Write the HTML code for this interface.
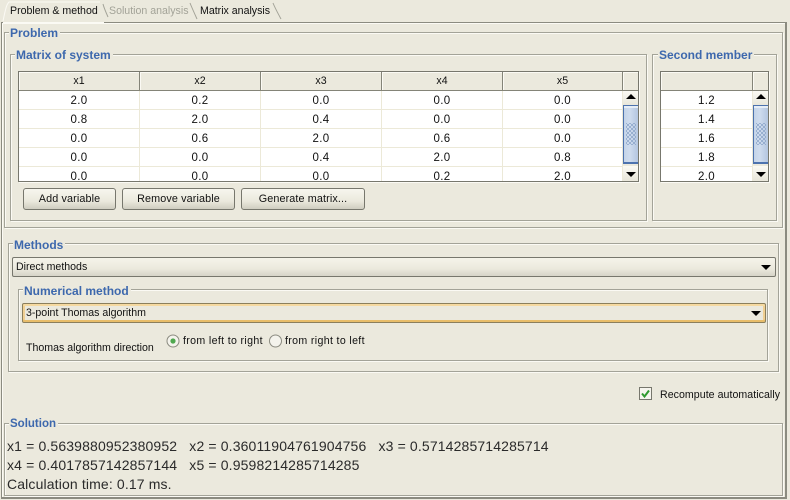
<!DOCTYPE html>
<html><head><meta charset="utf-8"><style>
html,body{margin:0;padding:0}
body{width:790px;height:500px;overflow:hidden;background:#ebe9dd;position:relative;font:10.6px/14px "Liberation Sans",sans-serif;color:#111}
div,span{position:absolute;box-sizing:border-box;white-space:nowrap}
.gb{border:1px solid #a3a398;box-shadow:1px 1px 0 #fbfaf4, inset 1px 1px 0 #fbfaf4}
.lg{font:bold 12px/14px "Liberation Sans",sans-serif;color:#3d68ad;background:#ebe9dd;padding:0 2px 0 1px}
.hd{background:#ebe9dd;border-right:1px solid #848478;border-bottom:1px solid #848478;text-align:center;height:19px;top:72px;line-height:19px;font-size:10.6px;padding-top:0;box-shadow:inset 1px 1px 0 #fbfaf4}
.tb{border:1px solid #77776d;background:#fff;overflow:hidden;box-shadow:1px 1px 0 #fbfaf4}
.cell{text-align:center;font-size:11.5px;line-height:21px;height:19px;border-right:1px solid #ece9d8;border-bottom:1px solid #ece9d8;background:#fff;letter-spacing:.3px}
.btn{top:188px;height:22px;border:1px solid #77776d;border-radius:3px;background:linear-gradient(#f7f6ee,#ebe9dd 60%,#cfcdc0);text-align:center;line-height:21px;font-size:10.8px;letter-spacing:.12px}
.combo{border:1px solid #77776d;border-radius:2px;background:linear-gradient(#f5f4ea,#ebe9dd 60%,#d6d4c8);padding-left:3px;line-height:19px;font-size:10.6px}
.arr{width:0;height:0;border-left:5px solid transparent;border-right:5px solid transparent;border-top:5px solid #000}
.sb{width:15px;background:#ebe9dd}
.up{width:15px;height:14px;background:linear-gradient(#fbfaf4,#e8e6da);}
.thumb{width:15px;background:linear-gradient(90deg,#c4d4e8,#cfdcee 40%,#b4c6e0);border-top:1px solid #4c72ae;border-bottom:2px solid #4c72ae;border-left:1px solid #4c72ae;box-shadow:inset 0 2px 0 #e6edf6}
.grip{width:10px;height:22px;background-image:radial-gradient(#7f9bc2 0.75px,transparent 0.95px),radial-gradient(#7f9bc2 0.75px,transparent 0.95px);background-size:4px 4px;background-position:0 0,2px 2px}
.tab{top:4px;font-size:10.6px;line-height:14px}
.sol{font-size:14px;line-height:19px;left:7px;letter-spacing:.14px;color:#2a2a2a}
.rt{letter-spacing:.35px}
</style></head><body>

<!-- tabs -->
<div class="tab" style="left:10px">Problem &amp; method</div>
<div class="tab" style="left:109px;color:#a3a398">Solution analysis</div>
<div class="tab" style="left:200px">Matrix analysis</div>
<svg style="position:absolute;left:0;top:0" width="300" height="24"><path d="M3 21 C5 12 6 5 9 2 H100" fill="none" stroke="#fbfaf4"/><path d="M103 4 Q104 8 108 17 M190 3 Q192 8 197 19 M273 3 Q275 8 281 19" fill="none" stroke="#a3a398"/></svg>

<!-- tab pane -->
<div style="left:1px;top:22px;width:786px;height:477px;border:1px solid #8b8b80;border-bottom:2px solid #8b8b80;border-right:2px solid #8b8b80;box-shadow:inset 1px 1px 0 #fbfaf4"></div>
<div style="left:3px;top:22px;width:101px;height:1px;background:#fbfaf4"></div>

<!-- Problem -->
<div class="gb" style="left:4px;top:32px;width:779px;height:196px"></div>
<div class="lg" style="left:9px;top:26px">Problem</div>

<!-- Matrix of system -->
<div class="gb" style="left:10px;top:54px;width:637px;height:167px"></div>
<div class="lg" style="left:15px;top:48px">Matrix of system</div>

<div class="tb" style="left:18px;top:71px;width:621px;height:111px"></div>
<div class="hd" style="left:19px;width:121px">x1</div>
<div class="hd" style="left:140px;width:121px">x2</div>
<div class="hd" style="left:261px;width:121px">x3</div>
<div class="hd" style="left:382px;width:121px">x4</div>
<div class="hd" style="left:503px;width:120px">x5</div>
<div class="hd" style="left:623px;width:15px;border-right:0"></div>

<div style="left:19px;top:91px;width:604px;height:90px;overflow:hidden;background:#fff">
<div class="cell" style="left:0;top:0;width:121px">2.0</div><div class="cell" style="left:121px;top:0;width:121px">0.2</div><div class="cell" style="left:242px;top:0;width:121px">0.0</div><div class="cell" style="left:363px;top:0;width:121px">0.0</div><div class="cell" style="left:484px;top:0;width:120px">0.0</div>
<div class="cell" style="left:0;top:19px;width:121px">0.8</div><div class="cell" style="left:121px;top:19px;width:121px">2.0</div><div class="cell" style="left:242px;top:19px;width:121px">0.4</div><div class="cell" style="left:363px;top:19px;width:121px">0.0</div><div class="cell" style="left:484px;top:19px;width:120px">0.0</div>
<div class="cell" style="left:0;top:38px;width:121px">0.0</div><div class="cell" style="left:121px;top:38px;width:121px">0.6</div><div class="cell" style="left:242px;top:38px;width:121px">2.0</div><div class="cell" style="left:363px;top:38px;width:121px">0.6</div><div class="cell" style="left:484px;top:38px;width:120px">0.0</div>
<div class="cell" style="left:0;top:57px;width:121px">0.0</div><div class="cell" style="left:121px;top:57px;width:121px">0.0</div><div class="cell" style="left:242px;top:57px;width:121px">0.4</div><div class="cell" style="left:363px;top:57px;width:121px">2.0</div><div class="cell" style="left:484px;top:57px;width:120px">0.8</div>
<div class="cell" style="left:0;top:76px;width:121px">0.0</div><div class="cell" style="left:121px;top:76px;width:121px">0.0</div><div class="cell" style="left:242px;top:76px;width:121px">0.0</div><div class="cell" style="left:363px;top:76px;width:121px">0.2</div><div class="cell" style="left:484px;top:76px;width:120px">2.0</div>
</div>

<!-- scrollbar 1 -->
<div class="sb" style="left:623px;top:91px;height:90px"></div>
<div class="up" style="left:623px;top:91px"></div>
<div class="arr" style="left:626px;top:94px;border-top:0;border-bottom:5px solid #000"></div>
<div class="thumb" style="left:623px;top:105px;height:59px"></div>
<div class="grip" style="left:626px;top:123px"></div>
<div class="up" style="left:623px;top:166px"></div>
<div class="arr" style="left:626px;top:172px"></div>

<!-- buttons -->
<div class="btn" style="left:23px;width:93px">Add variable</div>
<div class="btn" style="left:122px;width:113px">Remove variable</div>
<div class="btn" style="left:241px;width:124px">Generate matrix...</div>

<!-- Second member -->
<div class="gb" style="left:652px;top:54px;width:125px;height:167px"></div>
<div class="lg" style="left:658px;top:48px">Second member</div>
<div class="tb" style="left:660px;top:71px;width:109px;height:111px"></div>
<div class="hd" style="left:661px;width:92px"></div>
<div class="hd" style="left:753px;width:15px;border-right:0"></div>
<div style="left:661px;top:91px;width:92px;height:90px;overflow:hidden;background:#fff">
<div class="cell" style="left:0;top:0;width:92px">1.2</div>
<div class="cell" style="left:0;top:19px;width:92px">1.4</div>
<div class="cell" style="left:0;top:38px;width:92px">1.6</div>
<div class="cell" style="left:0;top:57px;width:92px">1.8</div>
<div class="cell" style="left:0;top:76px;width:92px">2.0</div>
</div>
<div class="sb" style="left:753px;top:91px;height:90px"></div>
<div class="up" style="left:753px;top:91px"></div>
<div class="arr" style="left:756px;top:94px;border-top:0;border-bottom:5px solid #000"></div>
<div class="thumb" style="left:753px;top:105px;height:59px"></div>
<div class="grip" style="left:756px;top:123px"></div>
<div class="up" style="left:753px;top:166px"></div>
<div class="arr" style="left:756px;top:172px"></div>

<!-- Methods -->
<div class="gb" style="left:8px;top:243px;width:771px;height:129px"></div>
<div class="lg" style="left:13px;top:238px">Methods</div>
<div class="combo" style="left:12px;top:257px;width:764px;height:20px">Direct methods</div>
<div class="arr" style="left:761px;top:265px"></div>

<!-- Numerical method -->
<div class="gb" style="left:18px;top:289px;width:750px;height:72px"></div>
<div class="lg" style="left:23px;top:284px">Numerical method</div>
<div class="combo" style="left:22px;top:303px;width:744px;height:20px;border-color:#8b7f5c;box-shadow:inset 0 -2px 0 #e8bd6a,inset 0 2px 0 #f5d9a0,inset 2px 0 0 #f0cf92,inset -2px 0 0 #f0cf92;background:#ebe9dd">3-point Thomas algorithm</div>
<div class="arr" style="left:751px;top:311px"></div>

<div style="left:26px;top:341px">Thomas algorithm direction</div>
<svg style="position:absolute;left:166px;top:334px" width="120" height="16">
<circle cx="7" cy="7" r="6" fill="#f4f3ec" stroke="#8b8b80"/><circle cx="7" cy="7" r="2.6" fill="#4fa84f"/>
<circle cx="109.500" cy="7" r="6" fill="#f4f3ec" stroke="#8b8b80"/>
</svg>
<div class="rt" style="left:183px;top:334px">from left to right</div>
<div class="rt" style="left:285px;top:334px">from right to left</div>

<!-- Recompute -->
<div style="left:639px;top:387px;width:13px;height:13px;border:1px solid #77776d;background:#f6f5ee"></div>
<svg style="position:absolute;left:639px;top:387px" width="13" height="13"><path d="M3 6.500 L5.500 9.500 L10 3.500" fill="none" stroke="#2f9a2f" stroke-width="2"/></svg>
<div style="left:660px;top:388px;letter-spacing:.05px">Recompute automatically</div>

<!-- Solution -->
<div class="gb" style="left:4px;top:423px;width:779px;height:73px"></div>
<div class="lg" style="left:9px;top:417px;font-size:11.5px">Solution</div>
<div class="sol" style="top:437px">x1 = 0.5639880952380952 &nbsp; x2 = 0.36011904761904756 &nbsp; x3 = 0.5714285714285714</div>
<div class="sol" style="top:456px">x4 = 0.4017857142857144 &nbsp; x5 = 0.9598214285714285</div>
<div class="sol" style="top:475px">Calculation time: 0.17 ms.</div>

</body></html>
